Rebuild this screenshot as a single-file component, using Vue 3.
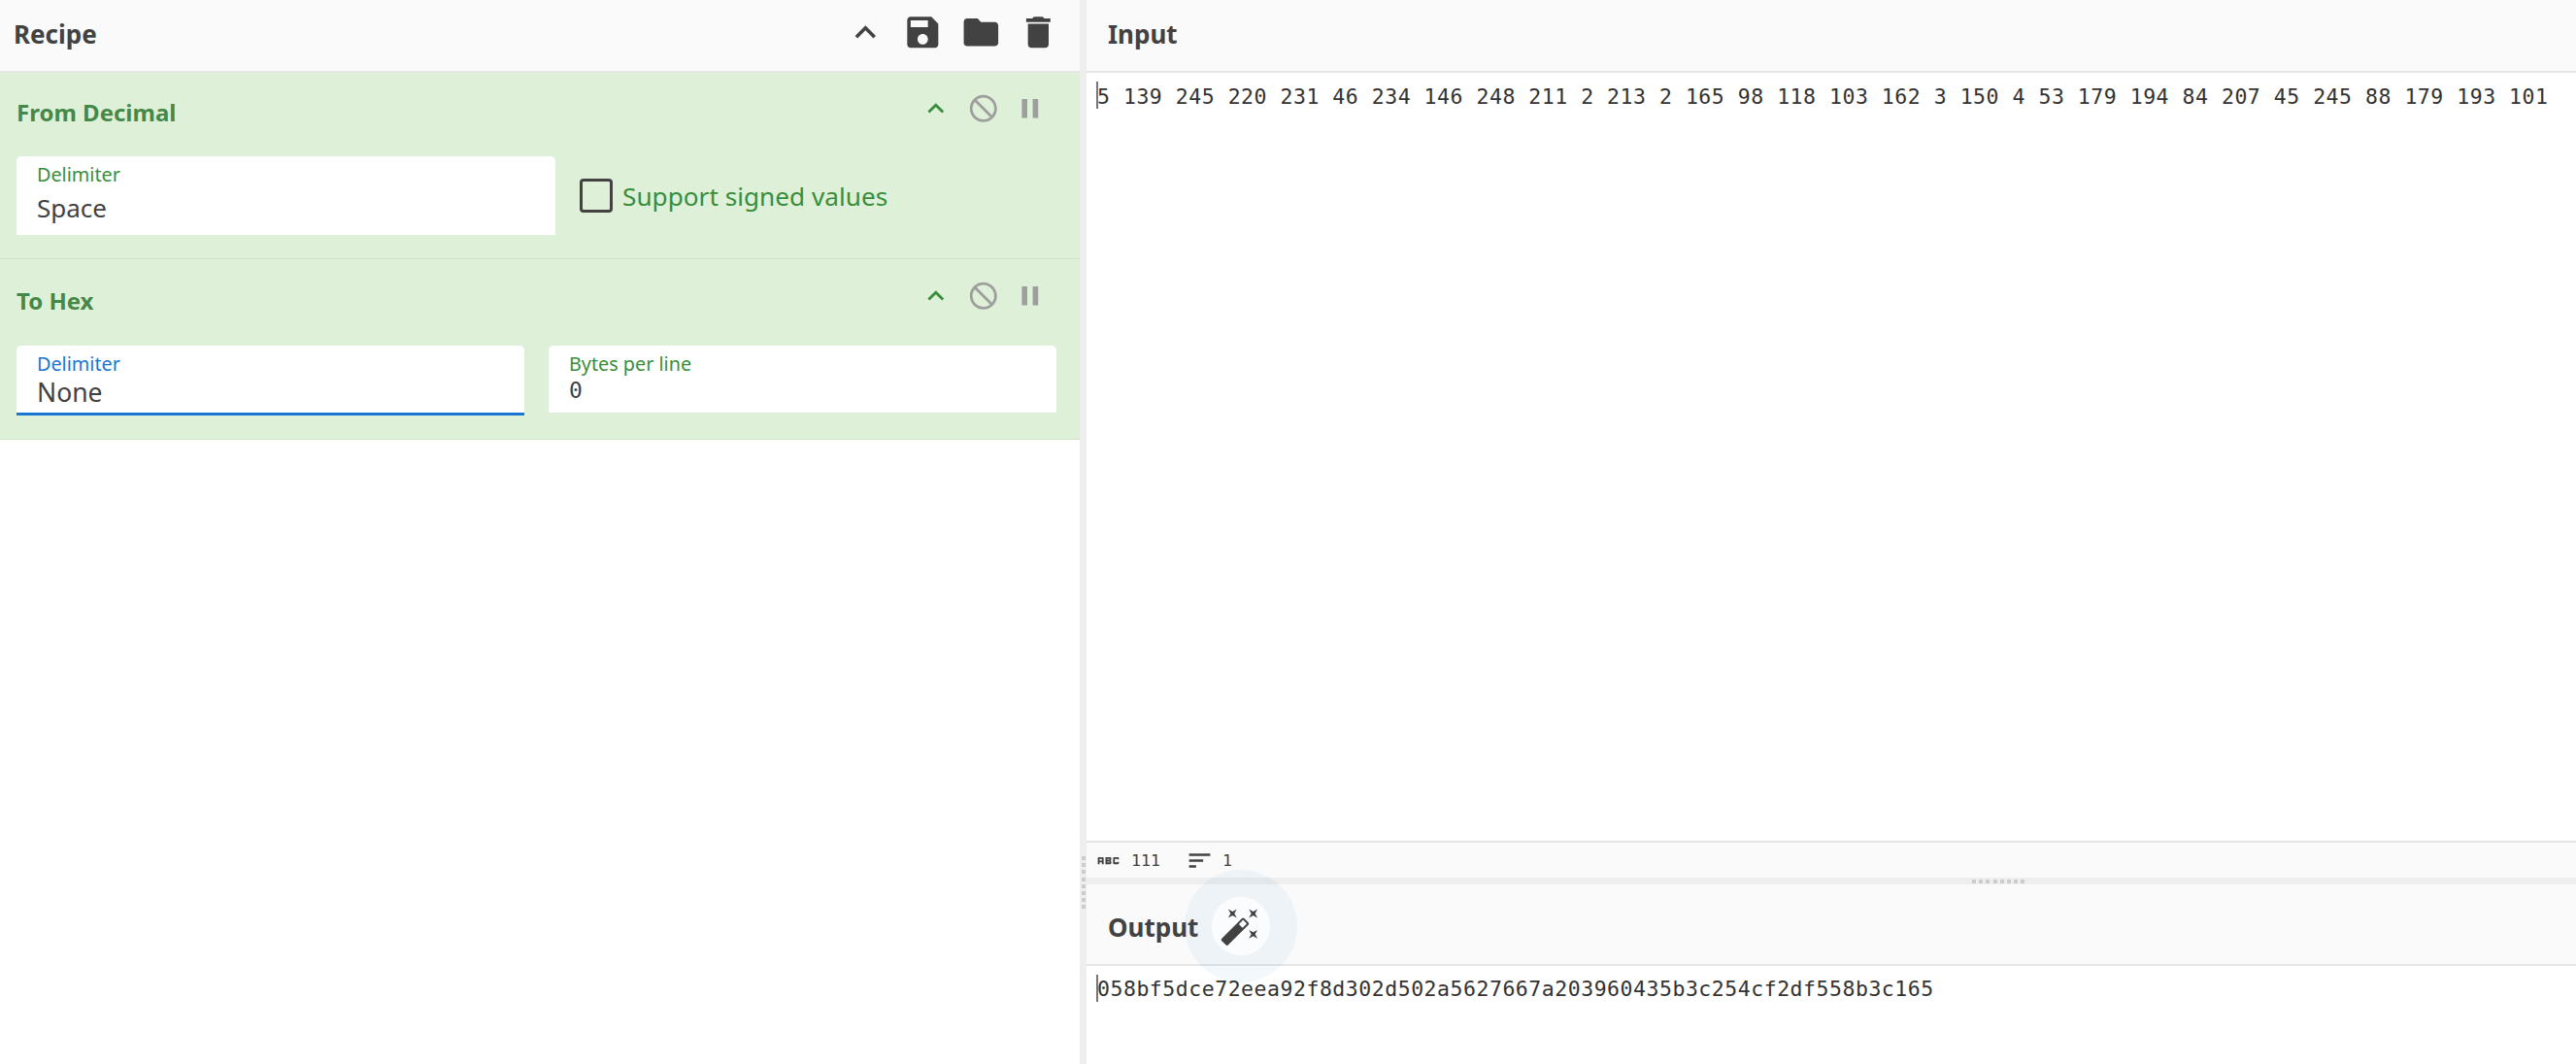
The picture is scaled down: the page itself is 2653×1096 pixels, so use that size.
<script setup>
const inputText = '5 139 245 220 231 46 234 146 248 211 2 213 2 165 98 118 103 162 3 150 4 53 179 194 84 207 45 245 88 179 193 101'
const outputText = '058bf5dce72eea92f8d302d502a5627667a203960435b3c254cf2df558b3c165'
const ICON = {
  up: 'M7.41 15.41L12 10.83l4.59 4.58L18 14l-6-6-6 6z',
  save: 'M17 3H5c-1.11 0-2 .9-2 2v14c0 1.1.89 2 2 2h14c1.1 0 2-.9 2-2V7l-4-4zm-5 16c-1.66 0-3-1.34-3-3s1.34-3 3-3 3 1.34 3 3-1.34 3-3 3zm3-10H5V5h10v4z',
  folder: 'M10 4H4c-1.1 0-1.99.9-1.99 2L2 18c0 1.1.9 2 2 2h16c1.1 0 2-.9 2-2V8c0-1.1-.9-2-2-2h-8l-2-2z',
  trash: 'M6 19c0 1.1.9 2 2 2h8c1.1 0 2-.9 2-2V7H6v12zM19 4h-3.5l-1-1h-5l-1 1H5v2h14V4z',
  ban: 'M12 2C6.48 2 2 6.48 2 12s4.48 10 10 10 10-4.48 10-10S17.52 2 12 2zm0 18c-4.42 0-8-3.58-8-8 0-1.85.63-3.55 1.69-4.9L16.9 18.31C15.55 19.37 13.85 20 12 20zm6.31-3.1L7.1 5.69C8.45 4.63 10.15 4 12 4c4.42 0 8 3.58 8 8 0 1.85-.63 3.55-1.69 4.9z',
  pause: 'M6 19h4V5H6v14zm8-14v14h4V5h-4z',
  sort: 'M3 18h6v-2H3v2zM3 6v2h18V6H3zm0 7h12v-2H3v2z',
  abc: 'M21 11h-1.5v-.5h-2v3h2V13H21v1c0 .55-.45 1-1 1h-3c-.55 0-1-.45-1-1v-4c0-.55.45-1 1-1h3c.55 0 1 .45 1 1v1zM8 10v5H6.5v-1.5h-2V15H3v-5c0-.55.45-1 1-1h3c.55 0 1 .45 1 1zm-1.5.5h-2V12h2v-1.5zm7 1.5c.55 0 1 .45 1 1v1c0 .55-.45 1-1 1h-4V9h4c.55 0 1 .45 1 1v1c0 .55-.45 1-1 1zM11 10.5v.75h2v-.75h-2zm2 2.25h-2v.75h2v-.75z',
  wand: 'M7.5 5.6L10 7 8.6 4.5 10 2 7.5 3.4 5 2l1.4 2.5L5 7zm12 9.8L17 14l1.4 2.5L17 19l2.5-1.4L22 19l-1.4-2.5L22 14zM22 2l-2.5 1.4L17 2l1.4 2.5L17 7l2.5-1.4L22 7l-1.4-2.5zm-7.63 5.29c-.39-.39-1.02-.39-1.41 0L1.29 18.96c-.39.39-.39 1.02 0 1.41l2.34 2.34c.39.39 1.02.39 1.41 0L16.7 11.05c.39-.39.39-1.02 0-1.41l-2.33-2.35zm-1.03 5.49l-2.12-2.12 2.44-2.44 2.12 2.12-2.44 2.44z'
}
const dotsV = 8
const dotsH = 8
</script>

<template>
  <div class="app">
    <section class="recipe">
      <header class="head">
        <h2 class="head-title">Recipe</h2>
        <div class="head-actions">
          <svg class="i-lg" viewBox="0 0 24 24"><path :d="ICON.up" /></svg>
          <svg class="i-lg" viewBox="0 0 24 24"><path :d="ICON.save" /></svg>
          <svg class="i-lg" viewBox="0 0 24 24"><path :d="ICON.folder" /></svg>
          <svg class="i-lg" viewBox="0 0 24 24"><path :d="ICON.trash" /></svg>
        </div>
      </header>

      <article class="op op-first">
        <div class="op-head">
          <span class="op-title">From Decimal</span>
          <div class="op-actions">
            <svg class="i-op up" viewBox="0 0 24 24"><path :d="ICON.up" /></svg>
            <svg class="i-op muted" viewBox="0 0 24 24"><path :d="ICON.ban" /></svg>
            <svg class="i-op muted" viewBox="0 0 24 24"><path :d="ICON.pause" /></svg>
          </div>
        </div>
        <div class="op-fields first-fields">
          <div class="field tall">
            <label class="f-label">Delimiter</label>
            <div class="f-value">Space</div>
          </div>
          <div class="check">
            <span class="box"></span>
            <span class="check-label">Support signed values</span>
          </div>
        </div>
      </article>

      <article class="op op-second">
        <div class="op-head">
          <span class="op-title">To Hex</span>
          <div class="op-actions">
            <svg class="i-op up" viewBox="0 0 24 24"><path :d="ICON.up" /></svg>
            <svg class="i-op muted" viewBox="0 0 24 24"><path :d="ICON.ban" /></svg>
            <svg class="i-op muted" viewBox="0 0 24 24"><path :d="ICON.pause" /></svg>
          </div>
        </div>
        <div class="op-fields second-fields">
          <div class="field short focused">
            <label class="f-label focus-label">Delimiter</label>
            <div class="f-value compact">None</div>
          </div>
          <div class="field short">
            <label class="f-label">Bytes per line</label>
            <div class="f-value mono-value">0</div>
          </div>
        </div>
      </article>
    </section>

    <div class="gutter-v">
      <div class="grip-v"><i v-for="n in dotsV" :key="n"></i></div>
    </div>

    <section class="io">
      <header class="head io-head"><h2 class="head-title">Input</h2></header>
      <div class="textarea input-area"><span class="caret"></span><span class="code">{{ inputText }}</span></div>
      <footer class="status">
        <svg class="i-st" viewBox="0 0 24 24"><path :d="ICON.abc" /></svg>
        <span class="st-num">111</span>
        <svg class="i-st sort" viewBox="0 0 24 24"><path :d="ICON.sort" /></svg>
        <span class="st-num">1</span>
      </footer>
      <div class="gutter-h">
        <div class="grip-h"><i v-for="n in dotsH" :key="n"></i></div>
      </div>
      <header class="head io-head out-head">
        <h2 class="head-title">Output</h2>
        <span class="wand">
          <svg class="i-lg" viewBox="0 0 24 24"><path :d="ICON.wand" /></svg>
        </span>
      </header>
      <div class="textarea output-area"><span class="caret"></span><span class="code">{{ outputText }}</span></div>
    </section>
  </div>
</template>

<style>
html, body { margin: 0; background: #fff; overflow: hidden; }
</style>

<style scoped>
.app {
  display: flex;
  width: 2653px;
  height: 1096px;
  overflow: hidden;
  font-family: "Noto Sans", "Open Sans", sans-serif;
  color: #424242;
  background: #fff;
}
.recipe { width: 1112px; flex: none; }
.gutter-v {
  width: 7px;
  flex: none;
  background: #eee;
  display: flex;
  flex-direction: column;
  align-items: center;
  padding-top: 882px;
  box-sizing: border-box;
}
.grip-v { display: flex; flex-direction: column; gap: 3.2px; width: 4px; }
.grip-v i { display: block; height: 4px; background: #ccc; }
.io { flex: 1; display: flex; flex-direction: column; min-width: 0; }

.head {
  height: 75px;
  box-sizing: border-box;
  background: #fafafa;
  border-bottom: 2px solid #e5e5e5;
  display: flex;
  align-items: center;
  padding-left: 14px;
}
.head-title { margin: 0 0 3px; font-size: 26px; font-weight: 700; color: #424242; line-height: 1; }
.head-actions { margin-left: auto; display: flex; gap: 16.8px; padding-right: 21px; margin-top: -7px; }
.i-lg { width: 42.67px; height: 42.67px; fill: #424242; display: block; }

.op { background: #dff0d8; box-sizing: border-box; padding: 0 24px 0 17px; border-bottom: 1px solid #cfe3c6; }
.op-first { height: 192px; }
.op-second { height: 186px; }
.op-head { display: flex; align-items: center; }
.op-first .op-head { height: 74px; }
.op-second .op-head { height: 76px; }
.op-title { font-size: 24px; font-weight: 700; color: #468847; }
.op-first .op-title { padding-top: 6px; }
.op-second .op-title { padding-top: 8px; }
.op-actions { margin-left: auto; display: flex; gap: 15.2px; padding-right: 10px; }
.i-op { width: 33.6px; height: 33.6px; display: block; }
.i-op.up { fill: #388e3c; }
.i-op.muted { fill: #9e9e9e; }

.op-fields { display: flex; }
.first-fields { margin-top: 12px; }
.second-fields { margin-top: 13px; gap: 25px; }
.field {
  background: #fff;
  border-radius: 5px 5px 0 0;
  padding-left: 21px;
  box-sizing: border-box;
}
.tall { width: 555px; height: 81px; padding-top: 6px; }
.short { width: 523px; height: 69px; padding-top: 6px; }
.focused { height: 72px; border-bottom: 3px solid #1976d2; }
.f-label { display: block; font-size: 19.8px; line-height: 26px; color: #388e3c; }
.focus-label { color: #1976d2; }
.f-value { font-size: 26px; line-height: 36px; color: #424242; margin-top: 3px; }
.compact { margin-top: -2px; font-size: 26.5px; }
.mono-value { font-family: "DejaVu Sans Mono", monospace; font-size: 23px; line-height: 32px; margin-top: -2px; }
.check { display: flex; align-items: center; margin-left: 25px; height: 81px; }
.box { width: 34px; height: 35px; box-sizing: border-box; border: 3px solid #424242; border-radius: 4px; }
.check-label { font-size: 26.2px; color: #388e3c; margin-left: 10px; }

.textarea { position: relative; padding: 0 0 0 11px; font-family: "DejaVu Sans Mono", monospace; font-size: 21.5px; letter-spacing: 0.52px; color: #333; white-space: pre; }
.input-area { height: 793px; flex: none; box-sizing: border-box; padding-top: 11px; line-height: 28px; border-bottom: 2px solid #e5e5e5; }
.output-area { flex: 1; padding-top: 10px; line-height: 28px; }
.caret { position: absolute; left: 10px; top: 9px; width: 2px; height: 28px; background: #777; }
.output-area .caret { top: 9px; }

.status { height: 36px; flex: none; box-sizing: border-box; background: #fafafa; display: flex; align-items: center; padding-left: 8px; }
.i-st { width: 29px; height: 29px; fill: #424242; display: block; }
.sort { margin-left: 26px; }
.st-num { font-family: "DejaVu Sans Mono", monospace; font-size: 16.6px; color: #424242; margin-left: 9px; }

.gutter-h { height: 7px; flex: none; background: #eee; display: flex; align-items: center; padding-left: 912px; }
.grip-h { display: flex; gap: 3.2px; }
.grip-h i { display: block; width: 4px; height: 4px; background: #ccc; }

.out-head { height: 84px; flex: none; }
.io-head { flex: none; padding-left: 22px; }
.out-head .head-title { margin: 5px 0 0; }
.wand {
  position: relative;
  z-index: 2;
  margin: 5px 0 0 22px;
  width: 42.67px;
  height: 42.67px;
  display: block;
}
.wand::before {
  content: "";
  position: absolute;
  left: -8px;
  top: -9px;
  width: 60px;
  height: 60px;
  border-radius: 50%;
  background: rgba(250, 252, 253, 0.98);
  box-shadow: 0 0 0 28px rgba(25, 118, 210, 0.05);
}
.wand .i-lg { position: relative; }
</style>
